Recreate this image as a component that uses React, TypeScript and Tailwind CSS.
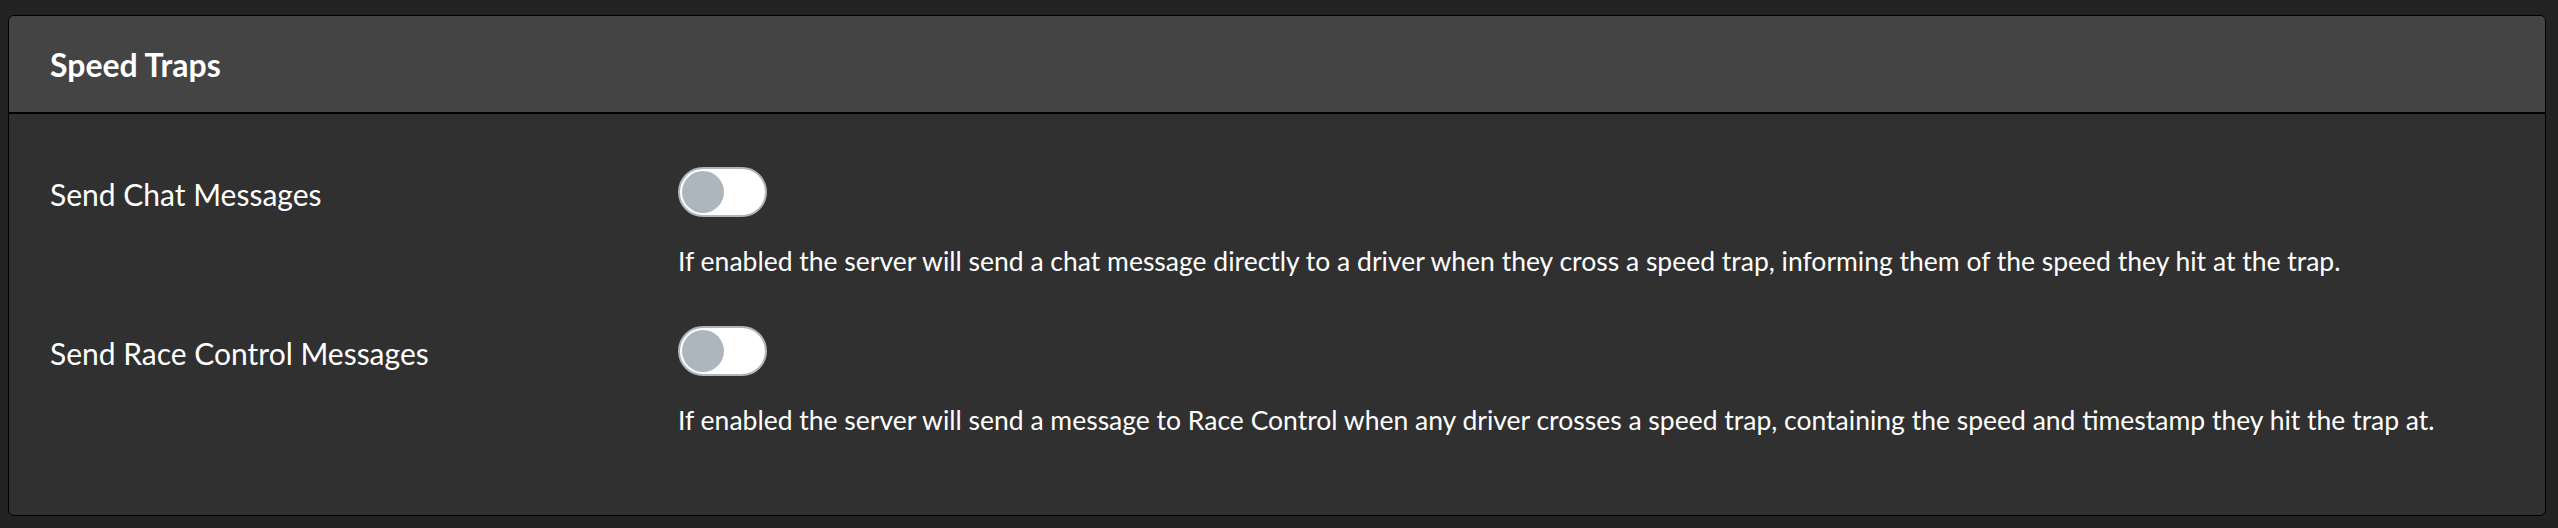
const rows = [
  {
    label: 'Send Chat Messages',
    help: 'If enabled the server will send a chat message directly to a driver when they cross a speed trap, informing them of the speed they hit at the trap.',
  },
  {
    label: 'Send Race Control Messages',
    help: 'If enabled the server will send a message to Race Control when any driver crosses a speed trap, containing the speed and timestamp they hit the trap at.',
  },
];

const Toggle = () => (
  <div className="w-[89px] h-[50px] rounded-full border-2 border-[#adb5bd] bg-white flex items-center pl-[2px]">
    <div className="w-[42px] h-[42px] rounded-full bg-[#adb5bd]" />
  </div>
);

const App = () => {
  return (
    <div className="w-[2558px] h-[528px] bg-[#222222] pt-[15px] pl-2 pr-3 font-['Lato',sans-serif] text-white">
      <div className="h-[501px] rounded-[6px] border border-black bg-[#303030] overflow-hidden flex flex-col">
        <div className="h-[98px] bg-[#444444] border-b-2 border-black flex items-center px-[41px] pt-[2px]">
          <h2 className="text-[32px] font-bold leading-none">Speed Traps</h2>
        </div>
        <div className="pt-[53px] px-[41px] flex flex-col gap-[46px]">
          {rows.map((row) => (
            <div key={row.label} className="grid grid-cols-[628px_1fr]">
              <div className="h-[50px] flex items-center pt-[4px] text-[30px]">{row.label}</div>
              <div>
                <Toggle />
                <p className="mt-[25px] text-[26.5px] leading-[38px]">{row.help}</p>
              </div>
            </div>
          ))}
        </div>
      </div>
    </div>
  );
};

export default App;
